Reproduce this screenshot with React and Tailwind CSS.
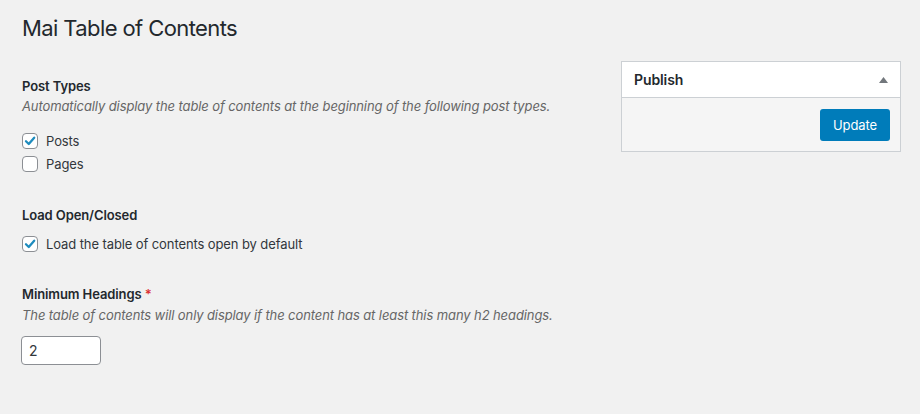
import React from "react";

function Checkbox({ checked }) {
  return (
    <span className="flex h-4 w-4 shrink-0 items-center justify-center rounded-[4px] border border-[#8c8f94] bg-white">
      {checked && (
        <svg width="14" height="14" viewBox="0 0 16 16" fill="none">
          <path d="M3.4 8.3 L6.6 11.4 L12.8 4.2" stroke="#1e8cbe" strokeWidth="2.6" strokeLinecap="round" strokeLinejoin="round" />
        </svg>
      )}
    </span>
  );
}

function CheckRow({ checked, label }) {
  return (
    <label className="flex h-[23px] items-center gap-[8px] text-[#32373c]">
      <Checkbox checked={checked} />
      <span>{label}</span>
    </label>
  );
}

export default function App() {
  return (
    <div className="min-h-screen bg-[#f1f1f1] font-['Inter','Noto_Sans',sans-serif] text-[13px] leading-5 tracking-[-0.1px] text-[#444]">
      <div className="pl-[22px] pr-[19px]">
        <h1 className="pt-[13px] text-[22px] leading-[30px] tracking-[-0.6px] text-[#23282d]">Mai Table of Contents</h1>

        <div className="flex gap-6">
          {/* Settings */}
          <div className="flex-1">
            <div className="mt-[33px] font-semibold text-[#23282d]">Post Types</div>
            <p className="italic text-[#666]">
              Automatically display the table of contents at the beginning of the following post types.
            </p>
            <div className="mt-[13px]">
              <CheckRow checked label="Posts" />
              <CheckRow label="Pages" />
            </div>

            <div className="mt-[30px] font-semibold text-[#23282d]">Load Open/Closed</div>
            <div className="mt-[7px]">
              <CheckRow checked label="Load the table of contents open by default" />
            </div>

            <div className="mt-[29px] font-semibold text-[#23282d]">
              Minimum Headings <span className="text-[#dc3232]">*</span>
            </div>
            <p className="mt-px italic text-[#666]">
              The table of contents will only display if the content has at least this many h2 headings.
            </p>
            <input
              type="number"
              defaultValue="2"
              className="-ml-px mt-[11px] h-[29px] w-[80px] rounded-[4px] border border-[#8c8f94] bg-white px-[7px] text-[14px] text-[#32373c] outline-none [appearance:textfield]"
            />
          </div>

          {/* Publish box */}
          <div className="mt-[18px] w-[280px] shrink-0 self-start border border-[#ccd0d4] bg-white">
            <div className="flex h-[36px] items-center justify-between border-b border-[#ccd0d4] pl-[12px] pr-[12px]">
              <span className="text-[14px] font-semibold text-[#23282d]">Publish</span>
              <svg width="9" height="6" viewBox="0 0 9 6">
                <path d="M4.5 0 L9 6 L0 6 Z" fill="#72777c" />
              </svg>
            </div>
            <div className="flex justify-end bg-[#f5f5f5] pb-[10px] pr-[10px] pt-[11px]">
              <button className="h-[32px] w-[70px] rounded-[3px] bg-[#007cba] text-[13px] text-white">
                Update
              </button>
            </div>
          </div>
        </div>
      </div>
    </div>
  );
}
